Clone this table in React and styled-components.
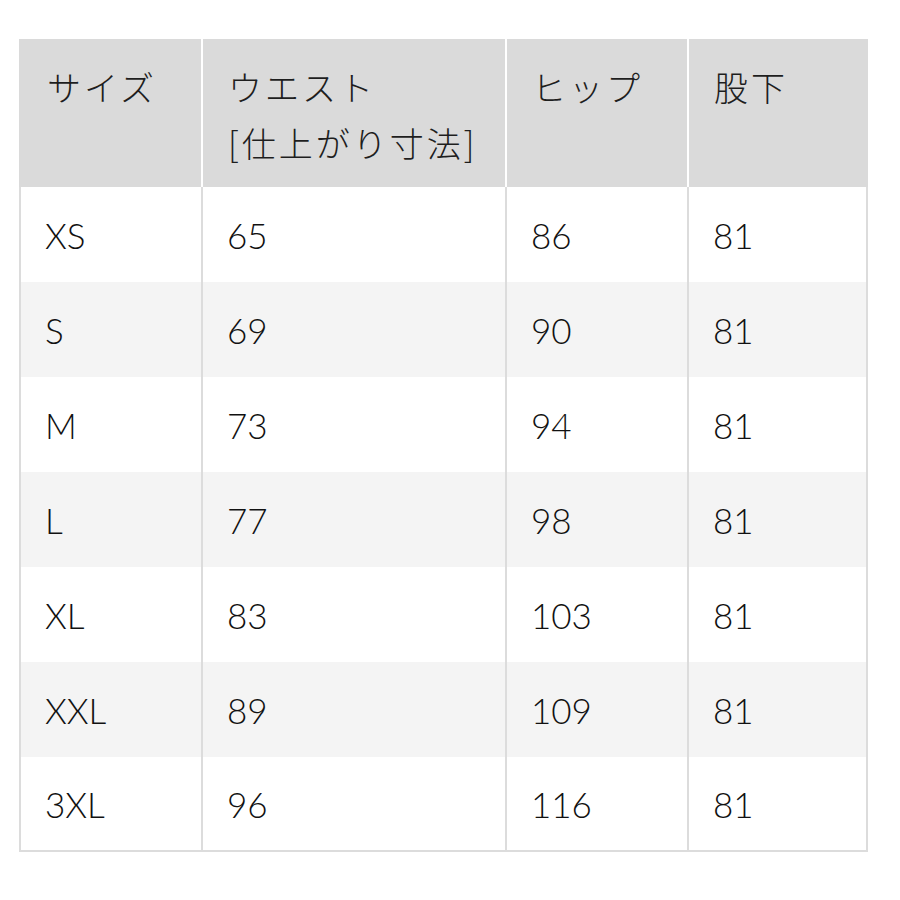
import styled, { createGlobalStyle } from "styled-components";

const GlobalStyle = createGlobalStyle`
	body {
		margin: 0;
		background: #ffffff;
		font-family: "Lato", "Noto Sans CJK JP", sans-serif;
		color: #1c1c1c;
	}
`;

const Page = styled.div`
	padding: 39px 0 0 19px;
`;

const Grid = styled.div`
	display: grid;
	grid-template-columns: 182px 304px 182px 181px;
	width: 849px;
`;

const HeadCell = styled.div`
	background: #dadada;
	height: 148px;
	box-sizing: border-box;
	padding: 20px 0 0 ${(p) => (p.$first ? "28px" : "25px")};
	border-left: ${(p) => (p.$first ? "none" : "2px solid #ffffff")};
	font-family: "Noto Sans CJK JP", sans-serif;
	font-size: 34px;
	font-weight: 300;
	line-height: 56px;
	letter-spacing: 3px;
	color: #1e1e1e;
`;

const Cell = styled.div`
	display: flex;
	align-items: center;
	height: 95px;
	box-sizing: border-box;
	padding-left: 24px;
	background: ${(p) => (p.$striped ? "#f4f4f4" : "#ffffff")};
	border-left: 2px solid #dcdcdc;
	border-right: ${(p) => (p.$last ? "2px solid #dcdcdc" : "none")};
	border-bottom: ${(p) => (p.$bottom ? "2px solid #dcdcdc" : "none")};
	font-size: 35px;
	font-weight: 300;
	color: #111111;
`;

const headers = ["サイズ", "ウエスト\n[仕上がり寸法]", "ヒップ", "股下"];

const rows = [
	["XS", "65", "86", "81"],
	["S", "69", "90", "81"],
	["M", "73", "94", "81"],
	["L", "77", "98", "81"],
	["XL", "83", "103", "81"],
	["XXL", "89", "109", "81"],
	["3XL", "96", "116", "81"],
];

const HeadText = ({ text }) =>
	text.split("\n").map((line, i) => <div key={i}>{line}</div>);

const App = () => {
	return (
		<Page>
			<GlobalStyle />
			<Grid>
				{headers.map((h, i) => (
					<HeadCell key={h} $first={i === 0}>
						<HeadText text={h} />
					</HeadCell>
				))}
				{rows.map((row, r) =>
					row.map((value, c) => (
						<Cell
							key={`${r}-${c}`}
							$striped={r % 2 === 1}
							$last={c === row.length - 1}
							$bottom={r === rows.length - 1}
						>
							{value}
						</Cell>
					))
				)}
			</Grid>
		</Page>
	);
};

export default App;
